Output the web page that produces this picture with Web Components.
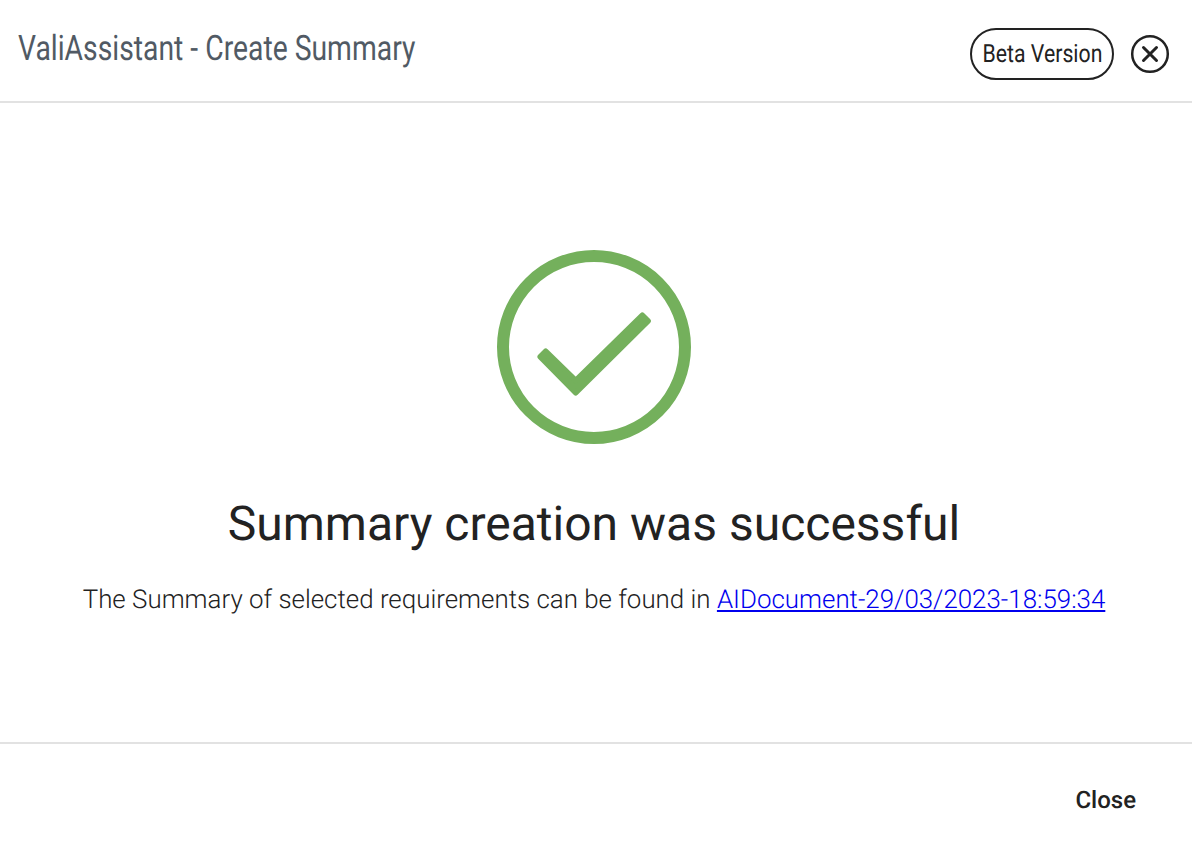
<!doctype html>
<html><head><meta charset="utf-8"><style>
html,body{margin:0;padding:0;background:#fff;height:100%}
body{font-family:Roboto,sans-serif;text-rendering:geometricPrecision}
</style></head><body>
<template id="t-header"><style>
:host{display:flex;box-sizing:border-box;height:103px;border-bottom:2px solid #e2e2e2;padding:28px 22px 0 18px;align-items:flex-start;justify-content:space-between}
.t{font:400 35px/42px Roboto,sans-serif;color:#515a64;display:block}
.r{display:flex;align-items:center;gap:16px}
.b{box-sizing:border-box;border:2px solid #222;border-radius:26px;height:52px;width:144px;display:flex;align-items:center;justify-content:center;font:400 25px Roboto,sans-serif;color:#222}
.b span,.t span{display:inline-block;white-space:nowrap}
.b span{transform:scaleX(.85)}
.t span{transform:scaleX(.809);transform-origin:left center}
svg{display:block}
</style><div class="t"><span>ValiAssistant - Create Summary</span></div><div class="r"><div class="b"><span>Beta Version</span></div>
<svg width="40" height="40" viewBox="0 0 40 40" fill="none" stroke="#222" stroke-width="2.5"><circle cx="20" cy="20" r="17.8"/><path d="M13.500 13.500l13 13M26.500 13.500l-13 13" stroke-linecap="round" stroke-width="3"/></svg></div></template>
<template id="t-body"><style>
:host{display:flex;flex-direction:column;align-items:center;box-sizing:border-box;height:641px;padding:147px 4px 0 0;border-bottom:2px solid #e2e2e2;color:#222}
h1{font:400 48px/60px Roboto,sans-serif;margin:50px 0 0;color:#222}
p{font:300 25.9px/32px Roboto,sans-serif;margin:30px 0 0;color:#222}
a{color:#0000ee;text-decoration:underline}
svg{display:block}
</style><svg width="194" height="194" viewBox="0 0 194 194" fill="none"><circle cx="97" cy="97" r="91" stroke="#74b05c" stroke-width="12"/><path d="M43.200 106.700L48.700 101.200 78.700 130.500 145.300 65.200 151.100 71 78.700 142.900Z" fill="#74b05c" stroke="#74b05c" stroke-width="5.500" stroke-linejoin="round"/></svg>
<h1>Summary creation was successful</h1><p>The Summary of selected requirements can be found in <a href="#">AIDocument-29/03/2023-18:59:34</a></p></template>
<template id="t-footer"><style>
:host{display:flex;justify-content:flex-end;padding:40px 56px 0 0;font:500 24px/32px Roboto,sans-serif;color:#222}
</style><span>Close</span></template>
<vali-header></vali-header><vali-body></vali-body><vali-footer></vali-footer>
<script>
for(const [n,id] of [['vali-header','t-header'],['vali-body','t-body'],['vali-footer','t-footer']]){
customElements.define(n,class extends HTMLElement{constructor(){super();this.attachShadow({mode:'open'}).appendChild(document.getElementById(id).content.cloneNode(true))}})}
</script></body></html>
